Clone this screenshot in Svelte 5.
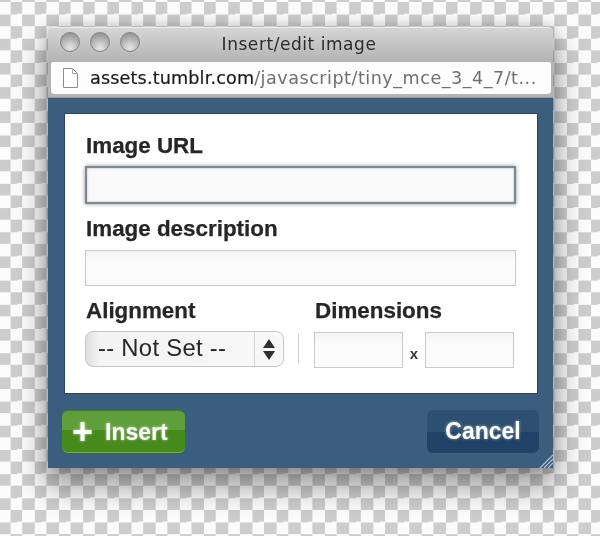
<script lang="ts">
	const lights = [0, 1, 2];
</script>

<div class="page">
	<div class="window">
		<div class="titlebar">
			<div class="lights">
				{#each lights as l (l)}
					<span class="light"></span>
				{/each}
			</div>
			<span class="title">Insert/edit image</span>
		</div>
		<div class="urlbar">
			<svg class="doc" width="17" height="22" viewBox="0 0 17 22" fill="none">
				<path d="M1.5 1.5H10.5L15.5 6.5V20.5H1.5Z" fill="#fff" stroke="#8d8d8d" />
				<path d="M10.5 1.5V6.5H15.5" stroke="#a5a5a5" />
			</svg>
			<span class="url"><b>assets.tumblr.com</b>/javascript/tiny_mce_3_4_7/t...</span>
		</div>
		<div class="body">
			<form class="panel">
				<label class="label" for="url">Image URL</label>
				<input id="url" class="field focused" type="text" />
				<label class="label second" for="desc">Image description</label>
				<input id="desc" class="field" type="text" />
				<div class="row">
					<div class="align">
						<div class="label">Alignment</div>
						<div class="select">
							<span class="value">-- Not Set --</span>
							<span class="stepper">
								<svg width="12" height="21" viewBox="0 0 12 21">
									<path d="M6 0L12 9H0Z M0 12H12L6 21Z" fill="#2c2f33" />
								</svg>
							</span>
						</div>
					</div>
					<div class="dims">
						<div class="label">Dimensions</div>
						<div class="dim-row">
							<input class="field small" type="text" />
							<span class="times">x</span>
							<input class="field small" type="text" />
						</div>
					</div>
				</div>
			</form>
			<div class="actions">
				<button type="button" class="btn insert"><span class="plus">+</span>Insert</button>
				<button type="button" class="btn cancel">Cancel</button>
			</div>
			<svg class="grip" width="14" height="14" viewBox="0 0 14 14" fill="none">
				<path d="M1 14L14 1M5 14L14 5M9 14L14 9" stroke="#b9c8d6" stroke-width="1.1" />
			</svg>
		</div>
	</div>
</div>

<style>
	:global(body) {
		margin: 0;
		font-family: "Liberation Sans", Arial, sans-serif;
	}
	.page {
		width: 600px;
		height: 536px;
		padding: 27px 0 0 48px;
		box-sizing: border-box;
		overflow: hidden;
		background-color: #fcfcfc;
		background-image: conic-gradient(#cdcdcd 25%, transparent 0 50%, #cdcdcd 0 75%, transparent 0);
		background-size: 24.2px 24.2px;
		background-position: -2px 2px;
		filter: blur(0.5px);
	}
	.window {
		width: 505px;
		height: 441px;
		display: flex;
		flex-direction: column;
		background: #b4b4b4;
		box-shadow: 0 16px 30px 3px rgba(0, 0, 0, 0.38), 0 0 14px rgba(0, 0, 0, 0.18);
		border-radius: 5px 5px 0 0;
	}
	.titlebar {
		height: 35px;
		flex: none;
		position: relative;
		display: flex;
		align-items: center;
		justify-content: center;
		background: linear-gradient(#d5d5d5, #b3b3b3);
		border-radius: 5px 5px 0 0;
		border-top: 1px solid #ececec;
		box-sizing: border-box;
	}
	.lights {
		position: absolute;
		left: 12px;
		top: 4px;
		display: flex;
		gap: 10px;
	}
	.light {
		width: 20px;
		height: 20px;
		border-radius: 50%;
		box-sizing: border-box;
		border: 1px solid #828282;
		background: radial-gradient(circle at 50% 85%, #e8e8e8 0, #b6b6b6 50%, #868686 100%);
	}
	.title {
		font-family: "DejaVu Sans", sans-serif;
		font-size: 17px;
		letter-spacing: 0.55px;
		color: #2b2b2b;
		margin-top: -3px;
		margin-left: -3px;
	}
	.urlbar {
		height: 33px;
		flex: none;
		display: flex;
		align-items: center;
		gap: 11px;
		margin: -1px 2px 0 3px;
		padding-left: 11px;
		background: #fdfdfd;
		border-radius: 4px;
	}
	.doc {
		flex: none;
	}
	.url {
		font-family: "DejaVu Sans", sans-serif;
		font-size: 17.6px;
		letter-spacing: 0.5px;
		color: #6f6f6f;
		white-space: nowrap;
	}
	.url b {
		font-weight: 400;
		letter-spacing: 0.15px;
		color: #1a1a1a;
		-webkit-text-stroke: 0.2px #1a1a1a;
	}
	.body {
		flex: 1;
		position: relative;
		margin-top: 3px;
		padding: 15px 15px 0 16px;
		background: #3c5e7e;
		border-top: 1px solid #8d98a3;
		box-sizing: border-box;
		display: flex;
		flex-direction: column;
	}
	.panel {
		height: 281px;
		flex: none;
		box-sizing: border-box;
		padding: 19px 21px 0 20px;
		background: #fff;
		border: 1px solid #2b4560;
		display: flex;
		flex-direction: column;
	}
	.label {
		display: block;
		padding-left: 1px;
		font-size: 22.4px;
		line-height: 26px;
		font-weight: 700;
		color: #262626;
		-webkit-text-stroke: 0.25px #262626;
	}
	.second {
		margin-top: 12px;
	}
	.field {
		display: block;
		box-sizing: border-box;
		width: 100%;
		height: 36px;
		margin: 8px 0 0;
		padding: 0;
		background: linear-gradient(#f4f4f4, #fbfbfb 30%);
		border: 1px solid #c9c9c9;
		outline: none;
	}
	.focused {
		height: 38px;
		margin-top: 7px;
		border: 2px solid #80888f;
		box-shadow: 0 0 4px #8a8f94, inset 0 0 2px #a9aeb3;
		background: #f9f9f9;
	}
	.row {
		display: flex;
		margin-top: 12px;
	}
	.align {
		width: 229px;
		flex: none;
	}
	.select {
		width: 199px;
		height: 36px;
		margin-top: 7px;
		box-sizing: border-box;
		display: flex;
		align-items: center;
		border: 1px solid #c6c6c6;
		border-radius: 8px;
		background: linear-gradient(90deg, #dedede, #f3f3f3 7%, #f8f8f8);
		position: relative;
	}
	.select::after {
		content: "";
		position: absolute;
		right: -16px;
		top: 2px;
		bottom: 3px;
		width: 1px;
		background: #cfcfcf;
	}
	.value {
		flex: 1;
		padding-left: 12px;
		margin-top: -2px;
		font-size: 23.8px;
		letter-spacing: 0.3px;
		color: #262626;
		white-space: nowrap;
	}
	.stepper {
		width: 28px;
		height: 100%;
		flex: none;
		display: flex;
		align-items: center;
		justify-content: center;
		border-left: 1px solid #d4d4d4;
	}
	.dims {
		flex: 1;
	}
	.dim-row {
		display: flex;
		align-items: center;
		margin-top: 8px;
	}
	.small {
		width: 89px;
		flex: none;
		margin: 0;
	}
	.times {
		width: 22px;
		text-align: center;
		font-family: "Liberation Sans", sans-serif;
		font-weight: 700;
		font-size: 15px;
		color: #333;
		padding-top: 6px;
		box-sizing: border-box;
	}
	.actions {
		display: flex;
		justify-content: space-between;
		margin-top: 16px;
		margin-left: -2px;
		margin-right: -1px;
	}
	.btn {
		height: 43px;
		padding: 0;
		border: none;
		border-radius: 6px;
		font-family: "Liberation Sans", Arial, sans-serif;
		font-size: 23px;
		font-weight: 700;
		color: #fff;
		text-shadow: 0 0 3px rgba(255, 255, 255, 0.6);
	}
	.insert {
		width: 123px;
		background: linear-gradient(#5f9f3b 0 46%, #478a1c 46%);
		border-top: 1px solid #3f7a22;
		border-bottom: 1px solid #73a85a;
		text-align: left;
		padding-left: 10px;
	}
	.plus {
		font-size: 36px;
		line-height: 1;
		margin-right: 12px;
		vertical-align: -4px;
	}
	.cancel {
		width: 112px;
		background: linear-gradient(#2d5070 0 50%, #1f4266 50%);
	}
	.grip {
		position: absolute;
		right: 0;
		bottom: 0;
	}
</style>
